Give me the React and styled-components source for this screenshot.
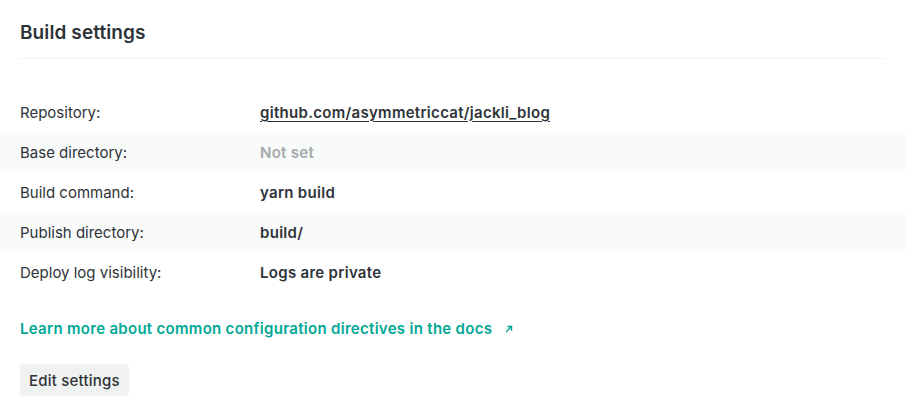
import React from "react";
import styled, { createGlobalStyle } from "styled-components";

const GlobalStyle = createGlobalStyle`
  body {
    margin: 0;
    background: #fff;
    font-family: Inter, "Noto Sans", sans-serif;
    color: #2e3338;
    -webkit-font-smoothing: antialiased;
  }
`;

const rows = [
  { label: "Repository:", value: "github.com/asymmetriccat/jackli_blog", kind: "link" },
  { label: "Base directory:", value: "Not set", kind: "muted" },
  { label: "Build command:", value: "yarn build" },
  { label: "Publish directory:", value: "build/" },
  { label: "Deploy log visibility:", value: "Logs are private" },
];

const App = () => {
  return (
    <>
      <GlobalStyle />
      <Card>
        <Header>
          <Title>Build settings</Title>
        </Header>
        <Table>
          {rows.map((row, idx) => (
            <Row key={idx} striped={idx % 2 === 1}>
              <Label>{row.label}</Label>
              <Value kind={row.kind}>{row.value}</Value>
            </Row>
          ))}
        </Table>
        <DocsLink href="#">
          Learn more about common configuration directives in the docs
          <Arrow viewBox="0 0 12 12">
            <path d="M2.5 9.5L9 3M4 3H9V8" fill="none" stroke="currentColor" strokeWidth="1.7" />
          </Arrow>
        </DocsLink>
        <Footer>
          <EditBtn>Edit settings</EditBtn>
        </Footer>
      </Card>
    </>
  );
};

export default App;

const Card = styled.div`
  width: 905px;
  padding-bottom: 17px;
`;

const Header = styled.div`
  margin: 0 20px;
  height: 58px;
  border-bottom: 1.5px solid #f1f2f2;
  display: flex;
  align-items: center;
`;

const Title = styled.h2`
  margin: 0;
  padding-top: 6px;
  font-size: 19px;
  font-weight: 600;
  letter-spacing: 0.1px;
  color: #2e3338;
`;

const Table = styled.div`
  margin-top: 33px;
  display: flex;
  flex-direction: column;
`;

const Row = styled.div`
  display: flex;
  align-items: center;
  height: 40px;
  padding: 0 20px;
  background: ${(p) => (p.striped ? "#f9fafa" : "transparent")};
  font-size: 15px;
`;

const Label = styled.div`
  width: 240px;
  color: #2e3338;
`;

const Value = styled.div`
  font-weight: 600;
  letter-spacing: 0.3px;
  color: ${(p) => (p.kind === "muted" ? "#a3a9ac" : "#2e3338")};
  text-decoration: ${(p) => (p.kind === "link" ? "underline" : "none")};
  text-underline-offset: 3px;
  text-decoration-thickness: 1px;
`;

const DocsLink = styled.a`
  display: inline-flex;
  align-items: center;
  margin: 27px 20px 0;
  font-size: 15px;
  font-weight: 600;
  letter-spacing: 0.3px;
  color: #00a896;
  text-decoration: none;
`;

const Arrow = styled.svg`
  width: 10px;
  height: 10px;
  margin-left: 12px;
`;

const Footer = styled.div`
  margin-top: 26px;
  padding: 0 20px;
`;

const EditBtn = styled.button`
  height: 32px;
  padding: 0 9px;
  border: 0;
  border-radius: 4px;
  background: #f0f1f1;
  font-family: inherit;
  font-size: 15px;
  font-weight: 500;
  letter-spacing: 0.2px;
  color: #2e3338;
  cursor: pointer;
`;
